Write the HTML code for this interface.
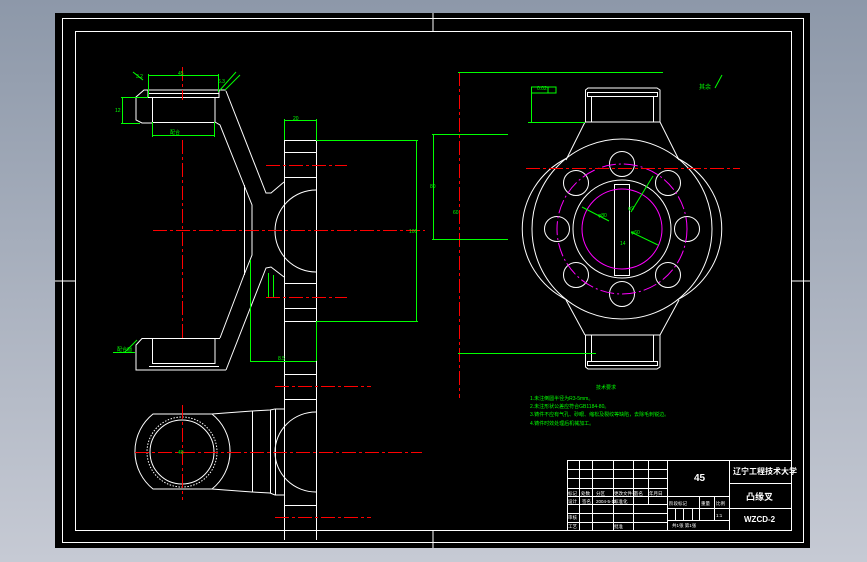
<!DOCTYPE html>
<html><head><meta charset="utf-8"><style>
html,body{margin:0;padding:0;width:867px;height:562px;overflow:hidden;background:linear-gradient(#8d98a9,#c6cad4);}
svg{position:absolute;left:0;top:0}
text{font-family:"Liberation Sans","Noto Sans CJK SC",sans-serif;}
</style></head><body>
<svg width="867" height="562" viewBox="0 0 867 562">
<rect x="55" y="13" width="755" height="535" fill="#000"/>
<g fill="none" stroke="#fff" stroke-width="1">
<rect x="62.5" y="18.5" width="741" height="524"/>
<rect x="75.5" y="31.5" width="716" height="499"/>
<line x1="433" y1="13" x2="433" y2="31"/><line x1="433" y1="531" x2="433" y2="548"/>
<line x1="55" y1="281" x2="75" y2="281"/><line x1="792" y1="281" x2="810" y2="281"/>
<rect x="567.5" y="460.5" width="224" height="70"/>
<line x1="667.5" y1="460" x2="667.5" y2="530"/><line x1="729.5" y1="460" x2="729.5" y2="530"/>
<line x1="579.5" y1="460" x2="579.5" y2="530"/><line x1="592.5" y1="460" x2="592.5" y2="530"/>
<line x1="613.5" y1="460" x2="613.5" y2="530"/><line x1="633.5" y1="460" x2="633.5" y2="530"/>
<line x1="648.5" y1="460" x2="648.5" y2="504"/>
<line x1="567" y1="469.5" x2="667" y2="469.5"/><line x1="567" y1="478.5" x2="667" y2="478.5"/>
<line x1="567" y1="488.5" x2="667" y2="488.5"/><line x1="567" y1="496.5" x2="729" y2="496.5"/>
<line x1="567" y1="504.5" x2="667" y2="504.5"/><line x1="567" y1="513.5" x2="667" y2="513.5"/>
<line x1="567" y1="522.5" x2="667" y2="522.5"/>
<line x1="667" y1="508.5" x2="791" y2="508.5"/><line x1="667" y1="520.5" x2="729" y2="520.5"/>
<line x1="729" y1="483.5" x2="791" y2="483.5"/>
<line x1="675.5" y1="508" x2="675.5" y2="520"/><line x1="683.5" y1="508" x2="683.5" y2="520"/>
<line x1="692.5" y1="508" x2="692.5" y2="520"/><line x1="699.5" y1="496" x2="699.5" y2="520"/>
<line x1="714.5" y1="496" x2="714.5" y2="520"/>

<line x1="284.5" y1="140" x2="284.5" y2="540"/><line x1="316.5" y1="140" x2="316.5" y2="540"/>
<line x1="284" y1="140.5" x2="316" y2="140.5"/><line x1="284" y1="152.5" x2="316" y2="152.5"/>
<line x1="284" y1="177.5" x2="316" y2="177.5"/><line x1="284" y1="283.5" x2="316" y2="283.5"/>
<line x1="284" y1="308.5" x2="316" y2="308.5"/><line x1="284" y1="321.5" x2="316" y2="321.5"/>
<line x1="284" y1="361.5" x2="316" y2="361.5"/><line x1="284" y1="374.5" x2="316" y2="374.5"/>
<line x1="284" y1="399.5" x2="316" y2="399.5"/><line x1="284" y1="505.5" x2="316" y2="505.5"/>
<path d="M316 190 A41 41 0 0 0 316 272"/>
<path d="M316 412 A41 40 0 0 0 316 492"/>
<line x1="75" y1="530.5" x2="284" y2="530.5"/>
<path d="M226 90 L144 90 L136 97 L136 120 L142 123 L152 123"/>
<line x1="148" y1="93.5" x2="219" y2="93.5"/><line x1="148" y1="97.5" x2="219" y2="97.5"/>
<line x1="148" y1="90" x2="148" y2="97"/><line x1="219" y1="90" x2="219" y2="98"/>
<path d="M152.5 97 V122.5 H215"/><path d="M215 97 V122.5"/>
<path d="M226 91 L266 193 L271 193 L284 182"/>
<path d="M215 122 L220 125 L244 185 L252 205 L252 255 L244 275 L220 338"/>
<line x1="244.5" y1="185" x2="244.5" y2="275"/>
<path d="M284 277 L271 267 L266 268 L226 370"/>
<path d="M220 338.5 L142 338.5 L136 345 L136 370 L226 370"/>
<line x1="149" y1="366.5" x2="219" y2="366.5"/>
<path d="M152.5 338 V363.5 H215 V338"/>
<path d="M153 414 L212 414 A48 48 0 0 1 212 489 L153 489 A48 48 0 0 1 153 414 Z"/>
<circle cx="182" cy="452" r="32"/>
<circle cx="182" cy="452" r="35" stroke-dasharray="1.5 1.5"/>
<path d="M212 414 L225 413 L252 411 L270 410 L275 409 L284 409"/>
<path d="M212 489 L225 490 L252 492 L270 493 L275 495 L284 495"/>
<line x1="252.5" y1="411" x2="252.5" y2="492"/><line x1="270.5" y1="410" x2="270.5" y2="493"/>
<line x1="275.5" y1="409" x2="275.5" y2="495"/>
<circle cx="622" cy="229" r="90"/>
<path d="M567 158 A83 80 0 0 0 567 300 M677 158 A83 80 0 0 1 677 300"/>
<path d="M585 122 L566 160 M660 122 L679 160 M585 335 L566 300 M660 335 L679 300"/>
<path d="M585.5 122 V90 L588 88 H657 L660 90 V122 Z"/>
<rect x="587.5" y="92.5" width="70" height="4"/>
<line x1="591.5" y1="97" x2="591.5" y2="122"/><line x1="653.5" y1="97" x2="653.5" y2="122"/>
<path d="M585.5 335 V367 L588 369 H657 L660 367 V335 Z"/>
<rect x="587.5" y="361.5" width="70" height="4"/>
<line x1="591.5" y1="335" x2="591.5" y2="361"/><line x1="653.5" y1="335" x2="653.5" y2="361"/>
<circle cx="622" cy="229" r="49"/>
<rect x="614.5" y="184.5" width="15" height="91"/>
<circle cx="622" cy="164" r="12.5"/><circle cx="622" cy="294" r="12.5"/>
<circle cx="557" cy="229" r="12.5"/><circle cx="687" cy="229" r="12.5"/>
<circle cx="576" cy="183" r="12.5"/><circle cx="668" cy="183" r="12.5"/>
<circle cx="576" cy="275" r="12.5"/><circle cx="668" cy="275" r="12.5"/>
</g>
<g fill="none" stroke="#f0f" stroke-width="1">
<circle cx="622" cy="229" r="65" stroke-dasharray="14 3 2 3"/>
<circle cx="622" cy="229" r="40"/>
</g>
<g fill="none" stroke="#f00" stroke-width="1" stroke-dasharray="14 3 3 3">
<line x1="153" y1="230.5" x2="425" y2="230.5"/>
<line x1="266" y1="165.5" x2="347" y2="165.5"/><line x1="266" y1="297.5" x2="347" y2="297.5"/>
<line x1="275" y1="386.5" x2="371" y2="386.5"/><line x1="135" y1="452.5" x2="422" y2="452.5"/>
<line x1="275" y1="517.5" x2="371" y2="517.5"/>
<line x1="182.5" y1="67" x2="182.5" y2="100"/><line x1="182.5" y1="140" x2="182.5" y2="340"/>
<line x1="182.5" y1="405" x2="182.5" y2="500"/>
<line x1="526" y1="168.5" x2="740" y2="168.5"/>
<line x1="459.5" y1="72" x2="459.5" y2="398"/>
</g>
<g fill="none" stroke="#0f0" stroke-width="1">
<line x1="148" y1="75.5" x2="218" y2="75.5"/><line x1="148.5" y1="74" x2="148.5" y2="97"/><line x1="218.5" y1="74" x2="218.5" y2="92"/>
<line x1="122.5" y1="97" x2="122.5" y2="123"/><line x1="121" y1="97.5" x2="148" y2="97.5"/><line x1="121" y1="123.5" x2="140" y2="123.5"/>
<line x1="152" y1="135.5" x2="214" y2="135.5"/><line x1="152.5" y1="122" x2="152.5" y2="137"/><line x1="214.5" y1="122" x2="214.5" y2="137"/>
<line x1="284" y1="120.5" x2="316" y2="120.5"/><line x1="284.5" y1="119" x2="284.5" y2="140"/><line x1="316.5" y1="119" x2="316.5" y2="140"/>
<line x1="316" y1="140.5" x2="418" y2="140.5"/><line x1="316" y1="321.5" x2="418" y2="321.5"/><line x1="416.5" y1="140" x2="416.5" y2="321"/>
<line x1="250.5" y1="260" x2="250.5" y2="361"/><line x1="250" y1="361.5" x2="316" y2="361.5"/><line x1="316.5" y1="321" x2="316.5" y2="361"/>
<line x1="268.5" y1="273" x2="268.5" y2="297"/><line x1="273.5" y1="275" x2="273.5" y2="297"/>
<line x1="433.5" y1="134" x2="433.5" y2="239"/><line x1="432" y1="134.5" x2="508" y2="134.5"/><line x1="432" y1="239.5" x2="508" y2="239.5"/>
<line x1="458" y1="72.5" x2="663" y2="72.5"/><line x1="458" y1="353.5" x2="596" y2="353.5"/>
<path d="M528 122.5 H585 M531.5 122 V87 H556 V93 H531"/>
<line x1="548" y1="87" x2="548" y2="93"/>
<line x1="631" y1="212" x2="653" y2="176"/>
<line x1="582" y1="207" x2="609" y2="221"/><line x1="631" y1="232" x2="658" y2="245"/>
<path d="M133 72 L143 80 M220 90 L236 72 M225 90 L240 75 M125 352 L137 340 M113 352.5 H135 M715 88 L722 75"/>
</g>
<g fill="#0f0" font-size="5">
<text x="178" y="75">45</text><text x="170" y="134">配合</text><text x="115" y="112">12</text>
<text x="293" y="120">20</text><text x="409" y="233">100</text><text x="430" y="188">80</text><text x="453" y="214">60</text>
<text x="278" y="360">8.5</text><text x="117" y="351">配合面</text><text x="136" y="78">3.2</text><text x="218" y="83">6.3</text>
<text x="178" y="454">40</text><text x="537" y="90">0.02</text>
<text x="598" y="217">φ80</text><text x="631" y="234">φ60</text><text x="628" y="210">φ9</text><text x="620" y="245">14</text>
<text x="699" y="89" font-size="6">其余</text>
<text x="596" y="389">技术要求</text>
<text x="530" y="400">1.未注倒圆半径为R3-5mm。</text>
<text x="530" y="408">2.未注形状公差应符合GB1184-80。</text>
<text x="530" y="416">3.铸件不应有气孔、砂眼、缩松及裂纹等缺陷，去除毛刺锐边。</text>
<text x="530" y="425">4.铸件时效处理后机械加工。</text>
</g>
<g fill="#fff">
<text x="694" y="481" font-size="10" font-weight="bold">45</text>
<text x="733" y="474" font-size="8" font-weight="bold">辽宁工程技术大学</text>
<text x="746" y="500" font-size="9" font-weight="bold">凸缘叉</text>
<text x="744" y="522" font-size="8" font-weight="bold">WZCD-2</text>
<g font-size="4.5">
<text x="568" y="495">标记</text><text x="581" y="495">处数</text><text x="596" y="495">分区</text><text x="614" y="495">更改文件号</text><text x="634" y="495">签名</text><text x="649" y="495">年月日</text>
<text x="568" y="503">设计</text><text x="582" y="503">签名</text><text x="596" y="503">2004-5-12</text><text x="614" y="503">标准化</text>
<text x="568" y="519">审核</text><text x="568" y="528">工艺</text><text x="614" y="528">批准</text>
<text x="669" y="505">阶段标记</text><text x="701" y="505">重量</text><text x="716" y="505">比例</text>
<text x="716" y="517">1:1</text><text x="672" y="527">共1张 第1张</text>
</g></g>
</svg>
</body></html>
